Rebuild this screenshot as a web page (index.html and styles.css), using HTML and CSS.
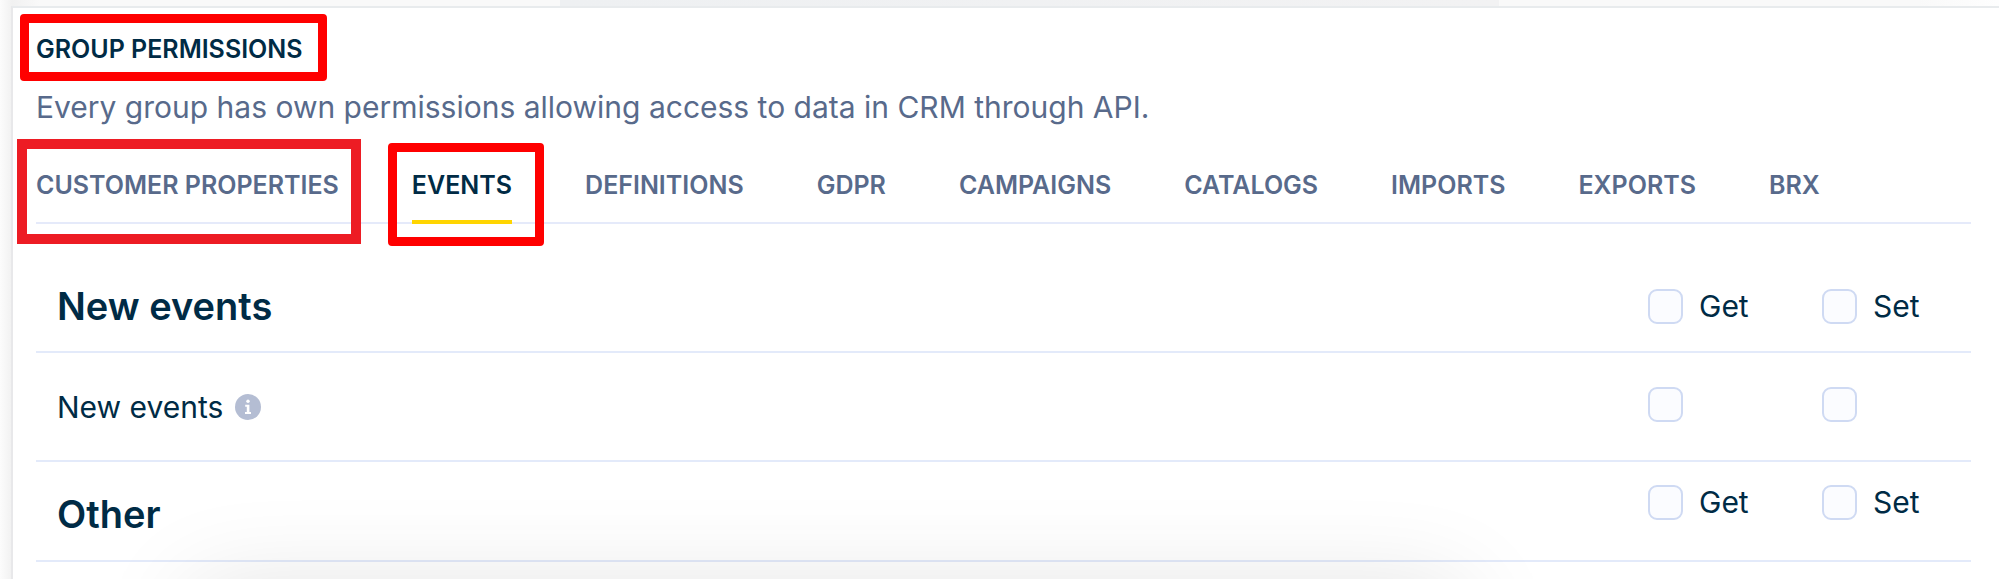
FILE: index.html
```html
<!DOCTYPE html>
<html lang="en">
<head>
<meta charset="UTF-8" />
<meta name="viewport" content="width=device-width, initial-scale=1" />
<title>Group permissions</title>
<link rel="stylesheet" href="styles.css">
</head>
<body>
  <div class="backdrop"></div>
  <main class="panel">
    <h1 class="title"><span class="marked mark-title">Group permissions</span></h1>
    <p class="description">Every group has own permissions allowing access to data in CRM through API.</p>

    <nav class="tabs">
      <a href="#customer" class="marked mark-customer">Customer properties</a>
      <a href="#events" class="active marked mark-events">Events</a>
      <a href="#definitions">Definitions</a>
      <a href="#gdpr">GDPR</a>
      <a href="#campaigns">Campaigns</a>
      <a href="#catalogs">Catalogs</a>
      <a href="#imports">Imports</a>
      <a href="#exports">Exports</a>
      <a href="#brx">BRX</a>
    </nav>

    <table class="permissions">
      <tbody>
        <tr class="group first">
          <th scope="row">New events</th>
          <td class="get"><label><input type="checkbox" />Get</label></td>
          <td class="set"><label><input type="checkbox" />Set</label></td>
        </tr>
        <tr class="item">
          <th scope="row">
            <span class="name">New events
              <svg class="info" viewBox="0 0 26 26" aria-hidden="true">
                <circle cx="13" cy="13" r="13" fill="#b4bdd3" />
                <circle cx="13" cy="7.3" r="1.7" fill="#fff" />
                <path d="M10.2 10.8h4.2v7.2h1.6v2h-6v-2h1.8v-5.2h-1.6z" fill="#fff" />
              </svg>
            </span>
          </th>
          <td class="get"><input type="checkbox" aria-label="New events get" /></td>
          <td class="set"><input type="checkbox" aria-label="New events set" /></td>
        </tr>
        <tr class="group">
          <th scope="row">Other</th>
          <td class="get"><label><input type="checkbox" />Get</label></td>
          <td class="set"><label><input type="checkbox" />Set</label></td>
        </tr>
      </tbody>
    </table>
  </main>
</body>
</html>
```
FILE: styles.css
```css
* {
  box-sizing: border-box;
}
body {
  margin: 0;
  min-height: 100vh;
  display: flex;
  flex-direction: column;
  font-family: Inter, Arial, sans-serif;
  color: #002b45;
  background: linear-gradient(to right, #fcfcfc, #f1f1f1 12px, #f9f9f9 40px, #f9f9f9 96%, #fefefe);
}
.backdrop {
  height: 6px;
  margin: 0 25% 0 28%;
  background: linear-gradient(to right, #eef0f2, #f2f2f3);
}
.panel {
  position: relative;
  flex: 1;
  margin-left: 11px;
  padding: 0 28px 0 23px;
  border-top: 2px solid #e8ebed;
  border-left: 2px solid #e8e8ea;
  background: #fff;
  overflow: hidden;
}
/* shadow of the dialog below the panel */
.panel::after {
  content: "";
  position: absolute;
  top: 100%;
  left: 9%;
  right: 27%;
  height: 200px;
  box-shadow: 0 10px 100px rgba(0, 0, 0, 0.12);
  pointer-events: none;
}
.title {
  margin: 0;
  padding-top: 25px;
  font-size: 25px;
  line-height: 32px;
  font-weight: 600;
  text-transform: uppercase;
}
.description {
  margin: 0;
  padding: 24px 0 22px;
  font-size: 30px;
  line-height: 36px;
  color: #586a8b;
}

/* tabs */
.tabs {
  display: flex;
  gap: 73px;
  border-bottom: 2px solid #e5eafa;
}
.tabs a {
  height: 77px;
  margin-bottom: -2px;
  padding-top: 22px;
  font-size: 25px;
  line-height: 32px;
  font-weight: 600;
  color: #586a8b;
  text-decoration: none;
  text-transform: uppercase;
}
.tabs a.active {
  color: #002b45;
  border-bottom: 4px solid #ffd500;
}

/* highlight frames */
.marked {
  position: relative;
}
.marked::after {
  content: "";
  position: absolute;
  border: 9px solid #f00;
  border-radius: 4px;
}
.mark-title::after {
  inset: -20px -24px -17px -16px;
}
.mark-customer::after {
  inset: -8px -22px -20px -19px;
  border: 10px solid #ed1c24;
  border-radius: 0;
}
.mark-events::after {
  inset: -4px -32px -26px -24px;
}

/* permission table */
.permissions {
  width: 100%;
  margin-top: 36px;
  border-collapse: separate;
  border-spacing: 0;
}
.permissions tr > * {
  padding: 0;
  border-bottom: 2px solid #e3eafa;
}
.permissions th {
  padding-left: 21px;
  text-align: left;
}
.group {
  height: 100px;
}
.group.first {
  height: 93px;
}
.item {
  height: 109px;
}
.group th {
  padding-top: 6px;
  font-size: 38px;
  line-height: 48px;
  font-weight: 600;
}
.group.first th {
  padding-top: 0;
}
.item th {
  font-size: 30px;
  line-height: 36px;
  font-weight: 400;
}
.get {
  width: 174px;
}
.set {
  width: 149px;
}
.permissions td {
  vertical-align: top;
  padding-top: 23px;
}
.permissions .first td {
  padding-top: 29px;
}
.permissions .item td {
  padding-top: 34px;
}
.name {
  display: flex;
  align-items: center;
  gap: 12px;
}
.info {
  width: 26px;
  height: 26px;
}
label {
  display: flex;
  align-items: center;
  gap: 16px;
  font-size: 30px;
  line-height: 35px;
}
input[type="checkbox"] {
  appearance: none;
  display: block;
  width: 35px;
  height: 35px;
  margin: 0;
  border: 2px solid #cfdaf3;
  border-radius: 9px;
  background: #fbfcff;
  cursor: pointer;
}
input[type="checkbox"]:checked {
  background: #ffd500;
}
```
